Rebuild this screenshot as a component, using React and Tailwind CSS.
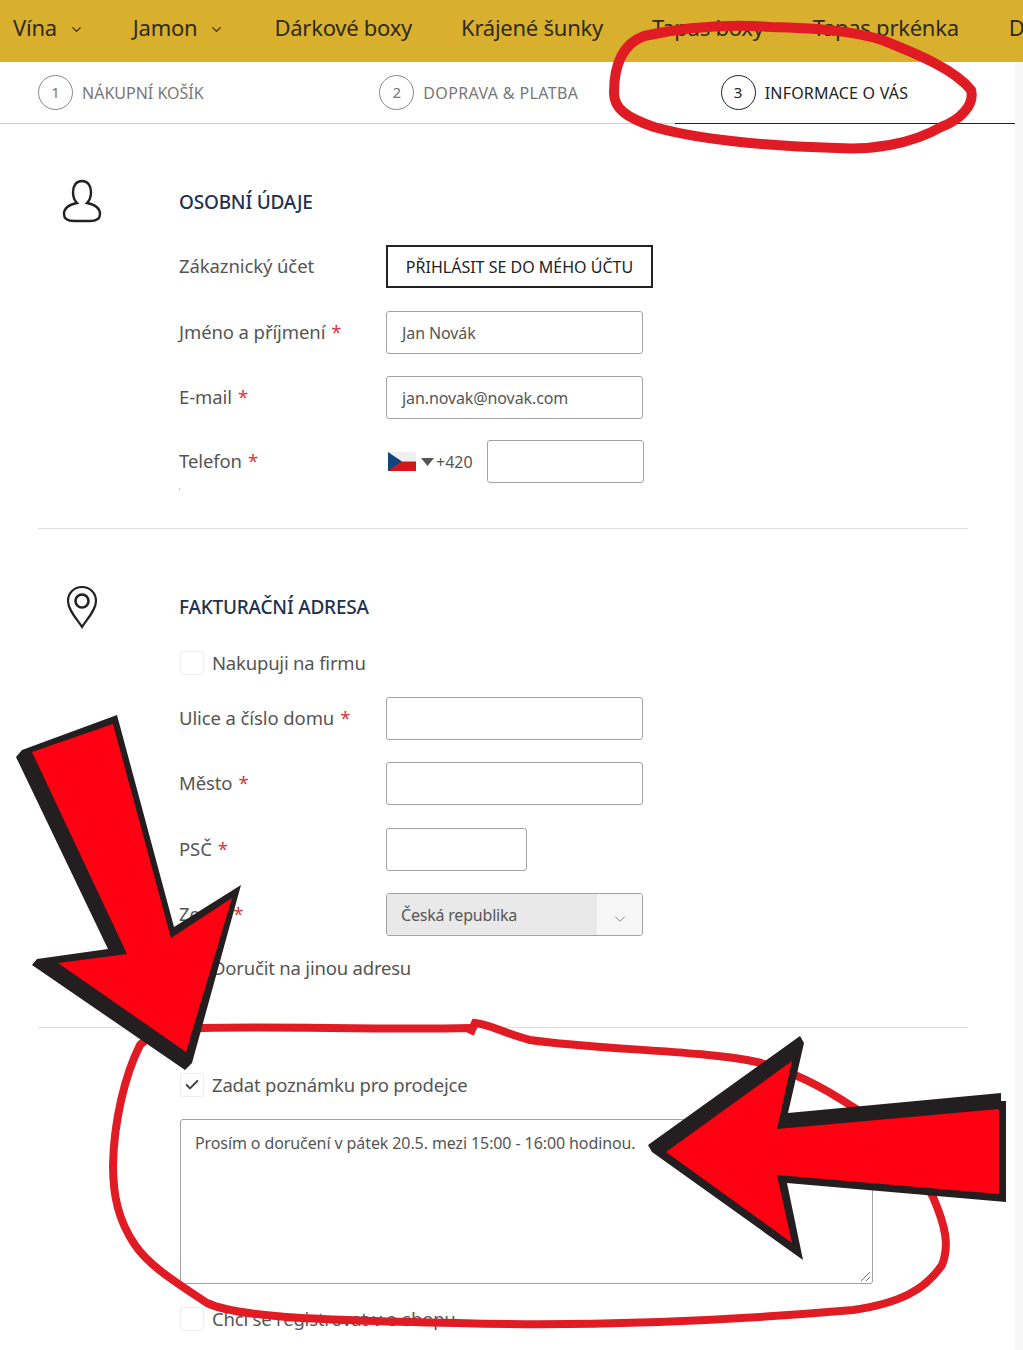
import { ChevronDown, Check } from 'lucide-react';

const navItems = [
  { label: 'Vína', chevron: true, cls: 'ml-[13px]' },
  { label: 'Jamon', chevron: true, cls: 'ml-[49px]' },
  { label: 'Dárkové boxy', cls: 'ml-[50px]' },
  { label: 'Krájené šunky', cls: 'ml-[49px]' },
  { label: 'Tapas boxy', cls: 'ml-[49px]' },
  { label: 'Tapas prkénka', cls: 'ml-[49px]' },
  { label: 'Dárkové poukazy', cls: 'ml-[50px]' },
];

const Star = () => <span className="ml-[6px] text-[#d9363e]">*</span>;

const Row = ({ label, required, children, cls = 'mt-[22px]' }) => (
  <div className={`flex items-center h-[43px] ${cls}`}>
    <div className="w-[207px] shrink-0 pb-[2px] text-[#555] text-[18.5px] tracking-[-0.1px]">
      {label}
      {required && <Star />}
    </div>
    {children}
  </div>
);

const Input = ({ value = '', cls = 'w-[257px]' }) => (
  <div className={`h-full border border-[#a3a3a3] rounded-[3px] bg-white flex items-center px-[15px] text-[16px] text-[#555] tracking-[-0.1px] ${cls}`}>
    {value}
  </div>
);

const Checkbox = ({ label, checked, cls }) => (
  <div className={`flex items-center h-[24px] ${cls}`}>
    <div className="w-[24px] h-[24px] border border-[#ececec] rounded-[3px] flex items-center justify-center shrink-0">
      {checked && <Check size={16} strokeWidth={3} className="text-[#444]" />}
    </div>
    <span className="ml-[8px] text-[#555] text-[18.5px] leading-[24px] tracking-[-0.2px]">{label}</span>
  </div>
);

const Step = ({ n, label, active, cls, textCls }) => (
  <div className={`flex items-center h-full ${cls}`}>
    <div className={`w-[35px] h-[35px] rounded-full border flex items-center justify-center text-[15px] shrink-0 ${active ? 'border-[#222] text-[#222]' : 'border-[#888] text-[#777]'}`}>
      {n}
    </div>
    <span className={`ml-[9px] text-[16px] ${active ? 'text-[#222]' : 'text-[#777]'} ${textCls}`}>{label}</span>
  </div>
);

const Overlay = () => (
  <svg className="absolute left-0 top-0 pointer-events-none" width="1023" height="1350" viewBox="0 0 1023 1350" fill="none">
    <path
      d="M644 36 C690 26 730 24 771 27 C810 28 850 30 882 40 C920 55 955 70 971 90 C975 105 960 120 941 127 C910 145 870 150 837 148 C770 146 700 140 654 127 C625 117 614 108 614 93 C614 70 620 45 644 36 Z"
      stroke="#e01b24"
      strokeWidth="10"
    />
    <path
      d="M470 1028 C380 1030 280 1026 203 1028 C170 1030 150 1034 140 1045 C125 1075 114 1120 113 1165 C113 1195 118 1220 135 1245 C150 1267 180 1285 207 1303 C235 1316 300 1320 457 1323 C560 1326 700 1323 853 1310 C900 1303 925 1290 942 1265 C950 1245 945 1225 933 1197 C915 1160 890 1130 853 1107 C820 1085 790 1070 757 1062 C700 1050 600 1050 530 1040 C505 1034 490 1024 475 1023 L470 1034"
      stroke="#e01b24"
      strokeWidth="8"
    />
    <polygon points="16,757 22,750 117,715 174,927 241,885 192,1063 185,1070 32,965 37,959 108,949" fill="#231f20" />
    <polygon points="32,752 113,724 171,938 232,898 186,1052 58,963 127,954" fill="#ff0012" />
    <polygon points="648,1145 800,1036 804,1043 788,1113 1001,1093 1001,1101 1006,1101 1006,1202 787,1183 803,1260 652,1152" fill="#231f20" />
    <polygon points="666,1152 792,1061 777,1129 999,1109 999,1194 777,1175 792,1243" fill="#ff0012" />
  </svg>
);

export default function App() {
  return (
    <div className="relative w-[1023px] h-[1350px] overflow-hidden bg-[#f7f7f7] font-['Noto_Sans',sans-serif]">
      <div className="w-[1015px] h-full bg-white">
        <nav className="w-[1023px] h-[62px] pb-[7px] bg-[#d9b02e] flex items-center text-[#2f2a1a] text-[22px] tracking-[-0.25px] whitespace-nowrap overflow-hidden">
          {navItems.map((item) => (
            <div key={item.label} className={`flex items-center shrink-0 ${item.cls}`}>
              {item.label}
              {item.chevron && <ChevronDown size={15} className="ml-[12px] mt-[3px]" />}
            </div>
          ))}
        </nav>

        <div className="h-[62px] grid grid-cols-3 border-b border-[#cfcfcf]">
          <Step n="1" label="NÁKUPNÍ KOŠÍK" cls="pl-[38px]" />
          <Step n="2" label="DOPRAVA & PLATBA" cls="pl-[41px]" textCls="tracking-[0.35px]" />
          <div className="relative">
            <Step n="3" label="INFORMACE O VÁS" active cls="pl-[44px]" textCls="tracking-[0.2px]" />
            <div className="absolute left-[-2px] right-0 bottom-[-1px] h-[1px] bg-[#222]" />
          </div>
        </div>

        <section className="relative pl-[179px] pt-[64px]">
          <svg className="absolute left-[62px] top-[55px]" width="40" height="44" viewBox="0 0 40 44" fill="none" stroke="#222" strokeWidth="2.4">
            <path d="M20 2 C14 2 11 7 11 13 C11 18 13 22 15 24 C10 25 2 28 2 35 C2 40 6 42 12 42 L28 42 C34 42 38 40 38 35 C38 28 30 25 25 24 C27 22 29 18 29 13 C29 7 26 2 20 2 Z" />
          </svg>
          <h2 className="h-[28px] leading-[28px] text-[#22304f] text-[19px] font-medium tracking-[-0.2px]">OSOBNÍ ÚDAJE</h2>
          <Row label="Zákaznický účet" cls="mt-[29px]">
            <button className="w-[267px] h-full border-2 border-[#222] text-[#222] text-[16px]">PŘIHLÁSIT SE DO MÉHO ÚČTU</button>
          </Row>
          <Row label="Jméno a příjmení" required cls="mt-[23px]">
            <Input value="Jan Novák" />
          </Row>
          <Row label="E-mail" required>
            <Input value="jan.novak@novak.com" />
          </Row>
          <Row label="Telefon" required cls="mt-[21px]">
            <div className="flex items-center h-full">
              <svg className="ml-[2px]" width="28" height="19" viewBox="0 0 28 19">
                <rect width="28" height="9.5" fill="#f0f0f0" />
                <rect y="9.5" width="28" height="9.5" fill="#d7141a" />
                <polygon points="0,0 14,9.5 0,19" fill="#11457e" />
              </svg>
              <svg className="ml-[5px]" width="13" height="8" viewBox="0 0 13 8">
                <polygon points="0,0 13,0 6.5,8" fill="#555" />
              </svg>
              <span className="ml-[2px] w-[51px] text-[16px] text-[#555]">+420</span>
              <Input cls="w-[157px]" />
            </div>
          </Row>
          <div className="absolute left-[179px] bottom-[-7px] w-[1px] h-[2px] bg-[#bbb]" />
        </section>

        <div className="mx-[38px] mt-[45px] w-[930px] h-[1px] bg-[#dcdcdc]" />

        <section className="relative pl-[179px] pt-[64px]">
          <svg className="absolute left-[66px] top-[56px]" width="32" height="44" viewBox="0 0 32 44" fill="none" stroke="#222" strokeWidth="2.2">
            <path d="M16 2 C8 2 2 8 2 16 C2 25 11 34 16 42 C21 34 30 25 30 16 C30 8 24 2 16 2 Z" />
            <circle cx="16" cy="16" r="6.5" strokeWidth="2.6" />
          </svg>
          <h2 className="h-[28px] leading-[28px] text-[#22304f] text-[19px] font-medium tracking-[-0.2px]">FAKTURAČNÍ ADRESA</h2>
          <Checkbox label="Nakupuji na firmu" cls="mt-[30px] ml-[1px]" />
          <Row label="Ulice a číslo domu" required cls="mt-[22px]">
            <Input />
          </Row>
          <Row label="Město" required>
            <Input />
          </Row>
          <Row label="PSČ" required cls="mt-[23px]">
            <Input cls="w-[141px]" />
          </Row>
          <Row label="Země" required>
            <div className="w-[257px] h-full border border-[#a3a3a3] rounded-[3px] flex overflow-hidden text-[16px] text-[#555] tracking-[-0.2px]">
              <div className="w-[210px] bg-[#e9e9e9] flex items-center pl-[14px]">Česká republika</div>
              <div className="flex-1 bg-[#f6f6f6] flex items-center justify-center pt-[8px]">
                <ChevronDown size={18} strokeWidth={1} className="text-[#666]" />
              </div>
            </div>
          </Row>
          <Checkbox label="Doručit na jinou adresu" cls="mt-[20px] ml-[1px]" />
        </section>

        <div className="mx-[38px] mt-[47px] w-[930px] h-[1px] bg-[#dcdcdc]" />

        <section className="pl-[180px] pt-[45px]">
          <Checkbox label="Zadat poznámku pro prodejce" checked />
          <div className="relative mt-[22px] w-[693px] h-[165px] border border-[#a3a3a3] rounded-[3px] px-[14px] pt-[11px] text-[16px] text-[#555] tracking-[-0.1px]">
            Prosím o doručení v pátek 20.5. mezi 15:00 - 16:00 hodinou.
            <svg className="absolute right-[1px] bottom-[1px]" width="11" height="11" viewBox="0 0 11 11" stroke="#777" fill="none">
              <path d="M1 10 L10 1 M6 10 L10 6" />
            </svg>
          </div>
          <Checkbox label="Chci se registrovat v e-shopu" cls="mt-[23px]" />
        </section>
      </div>
      <Overlay />
    </div>
  );
}
